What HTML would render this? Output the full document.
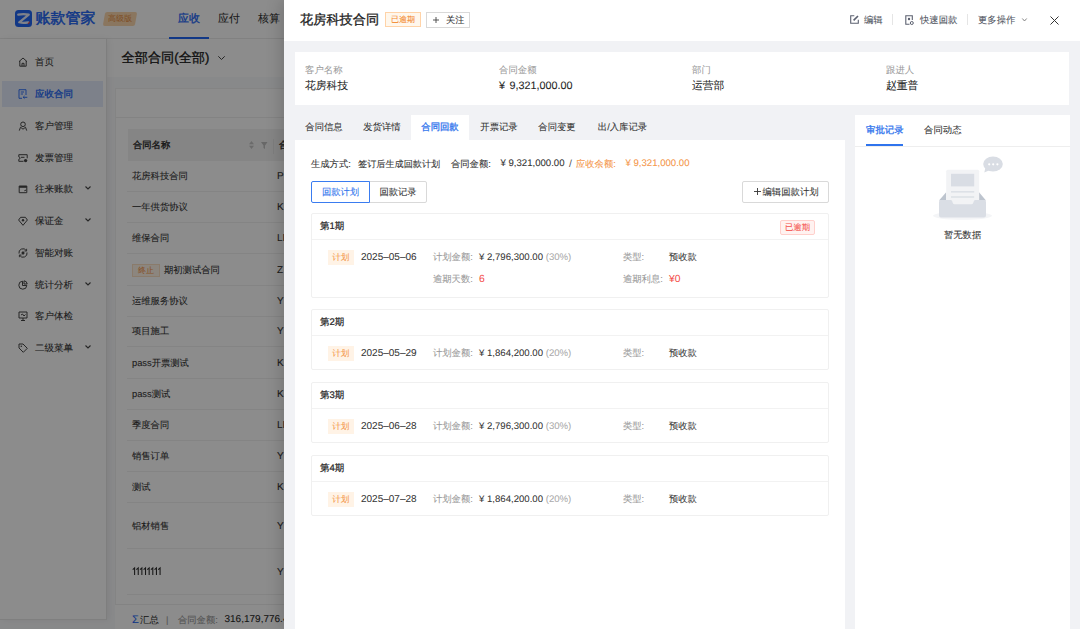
<!DOCTYPE html>
<html><head><meta charset="utf-8">
<style>
*{box-sizing:border-box;margin:0;padding:0}
html,body{width:1080px;height:629px;overflow:hidden;background:#fff}
body{font-family:"Liberation Sans",sans-serif;color:#262626;position:relative;text-rendering:geometricPrecision;-webkit-text-stroke:0.08px currentColor}
.a{position:absolute;white-space:nowrap}
svg{position:absolute;overflow:visible}
/* underlying page */
#page{position:absolute;left:0;top:0;width:1080px;height:629px;background:#f8f9fb;z-index:0}
#hdr{position:absolute;left:0;top:0;width:1080px;height:39px;background:#fff;border-bottom:1px solid #ececec}
#side{position:absolute;left:0;top:39px;width:106px;height:581px;background:#fff;border-bottom:1px solid #e8e8e8;box-shadow:1px 0 0 #e6e6e6,3px 0 6px rgba(0,0,0,0.06);z-index:2}
.nav{position:absolute;left:2px;width:101px;height:26px;font-size:9.5px;color:#333;line-height:27.5px}
.nav.on{background:#e3ecfb;color:#2266f5;-webkit-text-stroke:0.3px currentColor}
.nav svg{left:16px;top:8px;width:10px;height:10px;opacity:0.9}
.nav .tx{position:absolute;left:33px;top:0}
.nav .ch{left:83px;top:10px;width:6px;height:4px}
#titlebar{position:absolute;left:106px;top:39px;width:974px;height:38px;background:#fff}
#card{position:absolute;left:115px;top:88px;width:965px;height:541px;background:#fff;border:1px solid #f0f0f0}
.tr{position:absolute;left:127px;width:160px;height:31px;font-size:9.3px;color:#333;border-bottom:1px solid #f0f0f0;line-height:30px}
.tr span{position:absolute;left:5px}
.tr i{position:absolute;left:150px;top:1px;font-style:normal;font-size:10px}
#mask{z-index:1;position:absolute;left:0;top:0;width:1080px;height:629px;background:rgba(0,0,0,0.45)}
/* drawer */
#drawer{z-index:2;position:absolute;left:284px;top:0;width:796px;height:629px;background:#f1f2f5;box-shadow:-4px 0 14px rgba(0,0,0,0.15)}
#dh{position:absolute;left:0;top:0;width:796px;height:41px;background:#fff}
.hact{position:absolute;top:12px;font-size:9.35px;line-height:16px;color:#4f5460}
#info{position:absolute;left:11px;top:52px;width:774px;height:53px;background:#fff}
.ic1{position:absolute;top:12.3px;font-size:9.4px;line-height:12px;color:#9a9a9a;-webkit-text-stroke:0.05px currentColor}
.iv{position:absolute;top:26.5px;font-size:10.8px;line-height:14px;color:#262626;-webkit-text-stroke:0.08px currentColor}
#lp{position:absolute;left:11px;top:140px;width:550px;height:489px;background:#fff}
.tab{position:absolute;top:115px;height:25px;width:58px;font-size:9.35px;line-height:25px;text-align:center;color:#333}
.tab.on{background:#fff;color:#2f74ed}
#rp{position:absolute;left:571px;top:115px;width:215px;height:514px;background:#fff}
.pc{position:absolute;left:16px;width:518px;background:#fff;border:1px solid #f0f0f0;border-radius:2px}
.pc .hd{position:absolute;left:0;top:0;width:516px;height:26px;border-bottom:1px solid #f2f2f2}
.pc .hd b{position:absolute;left:8px;top:0;line-height:26px;font-size:9.5px;color:#262626;font-weight:normal;-webkit-text-stroke:0.22px currentColor}
.tag{position:absolute;left:15.5px;width:26.5px;height:15px;margin-top:-0.5px;background:#fff3e6;color:#f59a4f;font-size:8.6px;line-height:15px;text-align:center}
.dt{position:absolute;left:49px;font-size:10px;line-height:15px;color:#333;-webkit-text-stroke:0.05px currentColor}
.lb{position:absolute;font-size:9.3px;line-height:15px;color:#9a9a9a;-webkit-text-stroke:0.08px currentColor}
.vl{position:absolute;font-size:9.6px;line-height:15px;color:#333;-webkit-text-stroke:0.05px currentColor}
.gy{color:#aaa}
.md{-webkit-text-stroke:0.3px currentColor}
.ln{top:16px;font-size:9.3px;line-height:16px;color:#333}
</style></head><body>
<div id="page">
  <div id="hdr">
    <div class="a" style="left:15px;top:9.5px;width:17px;height:17.3px;background:#2266f5;border-radius:3.5px"></div>
    <svg style="left:15px;top:9.5px;width:17px;height:17px" viewBox="0 0 17 17"><path d="M3.2 4.6 Q8.5 3.6 13.8 4.6 L4.2 12.3 Q8.5 13.3 13.2 12.3" fill="none" stroke="#e6ecfb" stroke-width="2.2" stroke-linecap="round" stroke-linejoin="round"/><path d="M13.3 13.6 L14.5 12.2" stroke="#e0454a" stroke-width="1.1" stroke-linecap="round"/></svg>
    <div class="a" style="left:35.5px;top:9.3px;font-size:15px;color:#2266f5;line-height:20px;-webkit-text-stroke:0.5px currentColor">账款管家</div>
    <div class="a" style="left:104px;top:12px;width:32px;height:14px;background:#fcd7ae;transform:skewX(-10deg);border-radius:2px"></div>
    <div class="a" style="left:108px;top:12px;font-size:8px;line-height:14px;color:#e8944a">高级版</div>
    <div class="a md" style="left:178px;top:9px;font-size:11px;line-height:20px;color:#2266f5">应收</div>
    <div class="a" style="left:218px;top:9px;font-size:11px;line-height:20px;color:#333">应付</div>
    <div class="a" style="left:258px;top:9px;font-size:11px;line-height:20px;color:#333">核算</div>
    <div class="a" style="left:169px;top:37px;width:40px;height:2px;background:#2266f5"></div>
  </div>
  <div id="side">
    <div class="nav" style="top:10.30px"><svg viewBox="0 0 10 10"><path d="M1 4.6 L5 1 L9 4.6 M1.8 4 V9.2 H8.2 V4 M4 9.2 V6.3 H6 V9.2" fill="none" stroke="#333" stroke-width="1"/></svg><span class="tx">首页</span></div>
    <div class="nav on" style="top:42.05px"><svg viewBox="0 0 10 10"><path d="M4 9.3 H1 V0.7 H8 V6 M2.8 3 H6 M2.8 5 H5 M5.2 8.3 H9.3 M6.5 7 L5.2 8.3 L6.5 9.6" fill="none" stroke="#2266f5" stroke-width="1"/></svg><span class="tx">应收合同</span></div>
    <div class="nav" style="top:73.80px"><svg viewBox="0 0 10 10"><circle cx="5" cy="3.3" r="2.3" fill="none" stroke="#333" stroke-width="1"/><path d="M1.3 9.6 L2.5 6.2 L5 8.2 L7.5 6.2 L8.7 9.6" fill="none" stroke="#333" stroke-width="1"/></svg><span class="tx">客户管理</span></div>
    <div class="nav" style="top:105.55px"><svg viewBox="0 0 10 10"><path d="M5.5 8.3 H0.8 V6.3 A1.2 1.2 0 0 0 0.8 3.9 V1.7 H9.2 V5.3 M3 4.3 H6.5" fill="none" stroke="#333" stroke-width="1"/><circle cx="7.6" cy="7.6" r="1.7" fill="#333"/></svg><span class="tx">发票管理</span></div>
    <div class="nav" style="top:137.30px"><svg viewBox="0 0 10 10"><path d="M1.2 2 H8.8 V8.7 H1.2 Z M6.3 6.8 L8.3 6" fill="none" stroke="#333" stroke-width="1"/><rect x="1.2" y="2" width="7.6" height="1.8" fill="#333"/></svg><span class="tx">往来账款</span><svg class="ch" viewBox="0 0 6 4"><path d="M0.5 0.5 L3 3 L5.5 0.5" fill="none" stroke="#333" stroke-width="1.1"/></svg></div>
    <div class="nav" style="top:169.05px"><svg viewBox="0 0 10 10"><path d="M2.6 1.3 H7.4 L9.4 4 L5 9.3 L0.6 4 Z" fill="none" stroke="#333" stroke-width="1" stroke-linejoin="round"/><circle cx="5" cy="4.3" r="1.2" fill="#333"/></svg><span class="tx">保证金</span><svg class="ch" viewBox="0 0 6 4"><path d="M0.5 0.5 L3 3 L5.5 0.5" fill="none" stroke="#333" stroke-width="1.1"/></svg></div>
    <div class="nav" style="top:200.80px"><svg viewBox="0 0 10 10"><path d="M1 5.5 A4 4 0 0 1 8.3 2.6 M9 4.5 A4 4 0 0 1 1.7 7.4" fill="none" stroke="#333" stroke-width="1"/><path d="M8.6 0.8 V3 H6.4 M1.4 9.2 V7 H3.6" fill="none" stroke="#333" stroke-width="0.9"/><path d="M5 3 L6.8 5 L5 7 L3.2 5 Z" fill="#333"/></svg><span class="tx">智能对账</span></div>
    <div class="nav" style="top:232.55px"><svg viewBox="0 0 10 10"><path d="M4.5 1.2 A4 4 0 1 0 8.8 5.5 H4.5 Z M6 0.8 V4 H9.2 A3.5 3.5 0 0 0 6 0.8" fill="none" stroke="#333" stroke-width="1"/></svg><span class="tx">统计分析</span><svg class="ch" viewBox="0 0 6 4"><path d="M0.5 0.5 L3 3 L5.5 0.5" fill="none" stroke="#333" stroke-width="1.1"/></svg></div>
    <div class="nav" style="top:264.30px"><svg viewBox="0 0 10 10"><path d="M1 1 H9 V7 H1 Z M5 7 V9.5 M3 9.5 H7 M3 4 L4.5 3 L6 5 L7.5 3.5" fill="none" stroke="#333" stroke-width="1"/></svg><span class="tx">客户体检</span></div>
    <div class="nav" style="top:296.05px"><svg viewBox="0 0 10 10"><path d="M1 1 H5 L9.3 5.3 L5.3 9.3 L1 5 Z" fill="none" stroke="#333" stroke-width="1"/><circle cx="3.3" cy="3.3" r="0.8" fill="#333"/></svg><span class="tx">二级菜单</span><svg class="ch" viewBox="0 0 6 4"><path d="M0.5 0.5 L3 3 L5.5 0.5" fill="none" stroke="#333" stroke-width="1.1"/></svg></div>
  </div>
  <div id="titlebar">
    <div class="a md" style="left:15.5px;top:7.5px;font-size:13.2px;line-height:22px;color:#222">全部合同(全部)</div>
    <svg style="left:112px;top:16.5px;width:7px;height:4px" viewBox="0 0 7 4"><path d="M0.3 0.3 L3.5 3.5 L6.7 0.3" fill="none" stroke="#444" stroke-width="1"/></svg>
  </div>
  <div id="card">
    <div class="a" style="left:0;top:28px;width:965px;height:1px;background:#eee"></div>
    <div class="a" style="left:12px;top:40px;width:953px;height:32px;background:#f2f2f2"></div>
    <div class="a md" style="left:17px;top:49px;font-size:9.3px;line-height:14px;color:#262626">合同名称</div>
    <svg style="left:132.5px;top:52.3px;width:5px;height:8px" viewBox="0 0 5 8"><path d="M0 3.3 L2.5 0 L5 3.3 Z M0 4.7 L2.5 8 L5 4.7 Z" fill="#c4c4c4"/></svg>
    <svg style="left:144.5px;top:53px;width:6.5px;height:7px" viewBox="0 0 6.5 7"><path d="M0 0 H6.5 L4 3.5 V7 L2.5 6 V3.5 Z" fill="#bdbdbd"/></svg>
    <div class="a" style="left:156.5px;top:49.5px;width:1px;height:15px;background:#e6e6e6"></div>
    <div class="a md" style="left:163px;top:49px;font-size:9.3px;line-height:14px;color:#262626">合</div>
  </div>
  <div class="tr" style="top:161.3px"><span>花房科技合同</span><i>P</i></div>
  <div class="tr" style="top:192.1px"><span>一年供货协议</span><i>K</i></div>
  <div class="tr" style="top:223.3px"><span>维保合同</span><i>LI</i></div>
  <div class="tr" style="top:254.6px"><span style="left:5px;top:9.5px;width:28px;height:13px;line-height:11px;border:1px solid #fbe0c4;background:#fff4e8;color:#f5964a;font-size:8px;text-align:center">终止</span><span style="left:37px">期初测试合同</span><i>Z</i></div>
  <div class="tr" style="top:285.6px"><span>运维服务协议</span><i>Y</i></div>
  <div class="tr" style="top:316.3px"><span>项目施工</span><i>Y</i></div>
  <div class="tr" style="top:347.5px"><span>pass开票测试</span><i>K</i></div>
  <div class="tr" style="top:379.3px"><span>pass测试</span><i>K</i></div>
  <div class="tr" style="top:410.2px"><span>季度合同</span><i>LI</i></div>
  <div class="tr" style="top:441.1px"><span>销售订单</span><i>Y</i></div>
  <div class="tr" style="top:472.3px"><span>测试</span><i>K</i></div>
  <div class="tr" style="top:502.6px;height:46px;line-height:46px"><span>铝材销售</span><i>Y</i></div>
  <div class="tr" style="top:548.5px;height:46px;line-height:46px"><svg style="left:5px;top:19px;width:30px;height:7px" viewBox="0 0 30 7"><path d="M2.60 7 V0 L0.70 1.6 M6.24 7 V0 L4.34 1.6 M9.88 7 V0 L7.98 1.6 M13.52 7 V0 L11.62 1.6 M17.16 7 V0 L15.26 1.6 M20.80 7 V0 L18.90 1.6 M24.44 7 V0 L22.54 1.6 M28.08 7 V0 L26.18 1.6 " fill="none" stroke="#2a2a2a" stroke-width="1.05"/></svg><i>Y</i></div>
  <div class="a" style="left:115px;top:604px;width:170px;height:25px;background:#fff;border-top:1px solid #eee"></div>
  <div class="a" style="left:132px;top:613px;font-size:11px;line-height:14px;color:#2266f5">Σ</div><div class="a" style="left:140px;top:613px;font-size:9.4px;line-height:14px;color:#333">汇总</div>
  <div class="a" style="left:166px;top:613px;font-size:9.3px;line-height:14px;color:#999">|</div>
  <div class="a" style="left:178px;top:613px;font-size:9.3px;line-height:14px;color:#999">合同金额:</div>
  <div class="a" style="left:224.5px;top:613px;font-size:10px;line-height:14px;color:#262626">316,179,776.41</div>
</div>
<div id="mask"></div>
<div id="drawer">
  <div id="dh">
    <div class="a md" style="left:16px;top:10.5px;font-size:13.2px;line-height:18px;color:#222">花房科技合同</div>
    <div class="a" style="left:101px;top:12px;width:36px;height:15px;border:1px solid #ffd3a8;background:#fff7ec;color:#f38a2f;font-size:8px;line-height:13px;text-align:center">已逾期</div>
    <div class="a" style="left:142px;top:12px;width:44px;height:16px;border:1px solid #d9d9d9;background:#fff"></div>
    <svg style="left:148.5px;top:16.5px;width:6px;height:6px" viewBox="0 0 6 6"><path d="M3 0 V6 M0 3 H6" fill="none" stroke="#444" stroke-width="0.9"/></svg>
    <div class="a" style="left:162px;top:12px;font-size:9.2px;line-height:16px;color:#333">关注</div>
    <svg style="left:565.5px;top:15.3px;width:9px;height:9px" viewBox="0 0 9 9"><path d="M4.3 0.7 H0.7 V8.3 H8.3 V4.7" fill="none" stroke="#5c6170" stroke-width="1.1"/><path d="M3.6 5.4 L8 1" fill="none" stroke="#5c6170" stroke-width="1.6"/></svg>
    <div class="hact" style="left:580px">编辑</div>
    <div class="a" style="left:608px;top:14px;width:1px;height:11px;background:#e5e5e5"></div>
    <svg style="left:620.5px;top:15px;width:9px;height:10px" viewBox="0 0 9 10"><path d="M4.5 9.3 H0.8 V0.7 H7.3 V5" fill="none" stroke="#5c6170" stroke-width="1.1"/><circle cx="4" cy="4" r="1.2" fill="#5c6170"/><circle cx="6.8" cy="8" r="1.5" fill="none" stroke="#5c6170" stroke-width="1"/></svg>
    <div class="hact" style="left:636px">快速回款</div>
    <div class="a" style="left:683px;top:14px;width:1px;height:11px;background:#e5e5e5"></div>
    <div class="hact" style="left:694px">更多操作</div>
    <svg style="left:738px;top:18px;width:5px;height:4px" viewBox="0 0 5 4"><path d="M0.3 0.5 L2.5 3 L4.7 0.5" fill="none" stroke="#777" stroke-width="0.9"/></svg>
    <svg style="left:766px;top:16px;width:9px;height:9px" viewBox="0 0 9 9"><path d="M0.5 0.5 L8.5 8.5 M8.5 0.5 L0.5 8.5" fill="none" stroke="#333" stroke-width="1"/></svg>
  </div>
  <div id="info">
    <div class="ic1" style="left:10px">客户名称</div><div class="iv" style="left:10px">花房科技</div>
    <div class="ic1" style="left:204px">合同金额</div><div class="iv" style="left:204px;word-spacing:1.5px">¥ 9,321,000.00</div>
    <div class="ic1" style="left:397px">部门</div><div class="iv" style="left:397px">运营部</div>
    <div class="ic1" style="left:591px">跟进人</div><div class="iv" style="left:591px">赵重普</div>
  </div>
  <div class="tab" style="left:11px">合同信息</div>
  <div class="tab" style="left:69px">发货详情</div>
  <div class="tab on md" style="left:127px">合同回款</div>
  <div class="tab" style="left:186px">开票记录</div>
  <div class="tab" style="left:244px">合同变更</div>
  <div class="tab" style="left:303.5px;width:70px">出/入库记录</div>
  <div id="lp">
    <div class="a ln" style="left:16px">生成方式:</div><div class="a ln" style="left:63px;font-size:9.15px">签订后生成回款计划</div>
    <div class="a ln" style="left:156px">合同金额:</div><div class="a ln" style="left:205.5px;font-size:9.6px">¥ 9,321,000.00</div>
    <div class="a ln" style="left:274px;font-size:10.5px;color:#555;-webkit-text-stroke:0">/</div>
    <div class="a ln" style="left:281px;color:#f5964a">应收余额:</div><div class="a ln" style="left:330.5px;font-size:9.6px;color:#f5964a">¥ 9,321,000.00</div>
    <div class="a" style="left:16px;top:41px;width:59px;height:22px;border:1px solid #3a7cf0;color:#2f74ed;font-size:9.3px;line-height:20px;text-align:center;border-radius:2px 0 0 2px;background:#fff;z-index:1">回款计划</div>
    <div class="a" style="left:74px;top:41px;width:58px;height:22px;border:1px solid #d9d9d9;color:#333;font-size:9.3px;line-height:20px;text-align:center;border-radius:0 2px 2px 0">回款记录</div>
    <div class="a" style="left:447px;top:41px;width:87px;height:22px;border:1px solid #d9d9d9;border-radius:2px"></div>
    <svg style="left:459px;top:48px;width:7px;height:7px" viewBox="0 0 7 7"><path d="M3.5 0 V7 M0 3.5 H7" fill="none" stroke="#333" stroke-width="0.9"/></svg>
    <div class="a" style="left:467.5px;top:41px;font-size:9.35px;line-height:22px;color:#333">编辑回款计划</div>

    <div class="pc" style="top:73px;height:85px">
      <div class="hd"><b>第1期</b></div>
      <div class="a" style="left:468px;top:6px;width:35px;height:15px;border:1px solid #ffd0cc;background:#fff2f0;color:#f5504a;font-size:8.4px;line-height:13px;text-align:center;border-radius:2px">已逾期</div>
      <div class="tag" style="top:36px">计划</div>
      <div class="dt" style="top:36px">2025–05–06</div>
      <div class="lb" style="left:121px;top:36px">计划金额:</div>
      <div class="vl" style="left:167px;top:36px">¥ 2,796,300.00 <span class="gy">(30%)</span></div>
      <div class="lb" style="left:311px;top:36px">类型:</div>
      <div class="vl" style="left:357px;top:36px;font-size:9.3px">预收款</div>
      <div class="lb" style="left:121px;top:58px">逾期天数:</div>
      <div class="vl" style="left:167px;top:58px;color:#f5504a;font-size:10.3px">6</div>
      <div class="lb" style="left:311px;top:58px">逾期利息:</div>
      <div class="vl" style="left:357px;top:58px;color:#f5504a;font-size:10.3px">¥0</div>
    </div>
    <div class="pc" style="top:169px;height:61px">
      <div class="hd"><b>第2期</b></div>
      <div class="tag" style="top:36px">计划</div>
      <div class="dt" style="top:36px">2025–05–29</div>
      <div class="lb" style="left:121px;top:36px">计划金额:</div>
      <div class="vl" style="left:167px;top:36px">¥ 1,864,200.00 <span class="gy">(20%)</span></div>
      <div class="lb" style="left:311px;top:36px">类型:</div>
      <div class="vl" style="left:357px;top:36px;font-size:9.3px">预收款</div>
    </div>
    <div class="pc" style="top:242px;height:61px">
      <div class="hd"><b>第3期</b></div>
      <div class="tag" style="top:36px">计划</div>
      <div class="dt" style="top:36px">2025–06–28</div>
      <div class="lb" style="left:121px;top:36px">计划金额:</div>
      <div class="vl" style="left:167px;top:36px">¥ 2,796,300.00 <span class="gy">(30%)</span></div>
      <div class="lb" style="left:311px;top:36px">类型:</div>
      <div class="vl" style="left:357px;top:36px;font-size:9.3px">预收款</div>
    </div>
    <div class="pc" style="top:315px;height:61px">
      <div class="hd"><b>第4期</b></div>
      <div class="tag" style="top:36px">计划</div>
      <div class="dt" style="top:36px">2025–07–28</div>
      <div class="lb" style="left:121px;top:36px">计划金额:</div>
      <div class="vl" style="left:167px;top:36px">¥ 1,864,200.00 <span class="gy">(20%)</span></div>
      <div class="lb" style="left:311px;top:36px">类型:</div>
      <div class="vl" style="left:357px;top:36px;font-size:9.3px">预收款</div>
    </div>
  </div>
  <div id="rp">
    <div class="a md" style="left:11px;top:8.2px;font-size:9.4px;line-height:14px;color:#2f74ed">审批记录</div>
    <div class="a" style="left:11px;top:29px;width:37px;height:2px;background:#2f74ed"></div>
    <div class="a" style="left:69px;top:8.2px;font-size:9.4px;line-height:14px;color:#333">合同动态</div>
    <div class="a" style="left:0;top:31px;width:215px;height:1px;background:#eee"></div>
    <svg style="left:70px;top:35px;width:85px;height:75px" viewBox="0 0 85 75">
      <ellipse cx="37.5" cy="65.8" rx="29.5" ry="4" fill="#f4f5f7"/>
      <path d="M14 50.5 L21.2 42.3 V50.5 Z M61 50.5 L54 42.3 V50.5 Z" fill="#bdc4ce"/>
      <rect x="21.2" y="19.7" width="33" height="36" rx="1.5" fill="#f2f3f5"/>
      <rect x="26" y="23.8" width="23.2" height="12.6" fill="#d9dde4"/>
      <rect x="26" y="41" width="23.2" height="1.6" fill="#dde1e7"/>
      <rect x="26" y="46.2" width="23.2" height="1.6" fill="#dde1e7"/>
      <path d="M14 52 Q14 50 16 50 H25.5 Q26.8 50 27.2 51.3 L27.8 53 Q28.2 54.2 29.5 54.2 H46.5 Q47.8 54.2 48.2 53 L48.8 51.3 Q49.2 50 50.5 50 H59 Q61 50 61 52 V65.5 Q61 67.5 59 67.5 H16 Q14 67.5 14 65.5 Z" fill="#dadee5"/>
      <ellipse cx="68" cy="14" rx="9.8" ry="7.5" fill="#d9dde4"/>
      <path d="M60.5 17 L59.3 22.5 L65 20 Z" fill="#d9dde4"/>
      <circle cx="64.2" cy="14.3" r="1.1" fill="#fff"/><circle cx="68.2" cy="14.3" r="1.1" fill="#fff"/><circle cx="72.4" cy="14.3" r="1.1" fill="#fff"/>
    </svg>
    <div class="a" style="left:89px;top:113px;font-size:9.3px;line-height:14px;color:#333">暂无数据</div>
  </div>
</div>
</body></html>
